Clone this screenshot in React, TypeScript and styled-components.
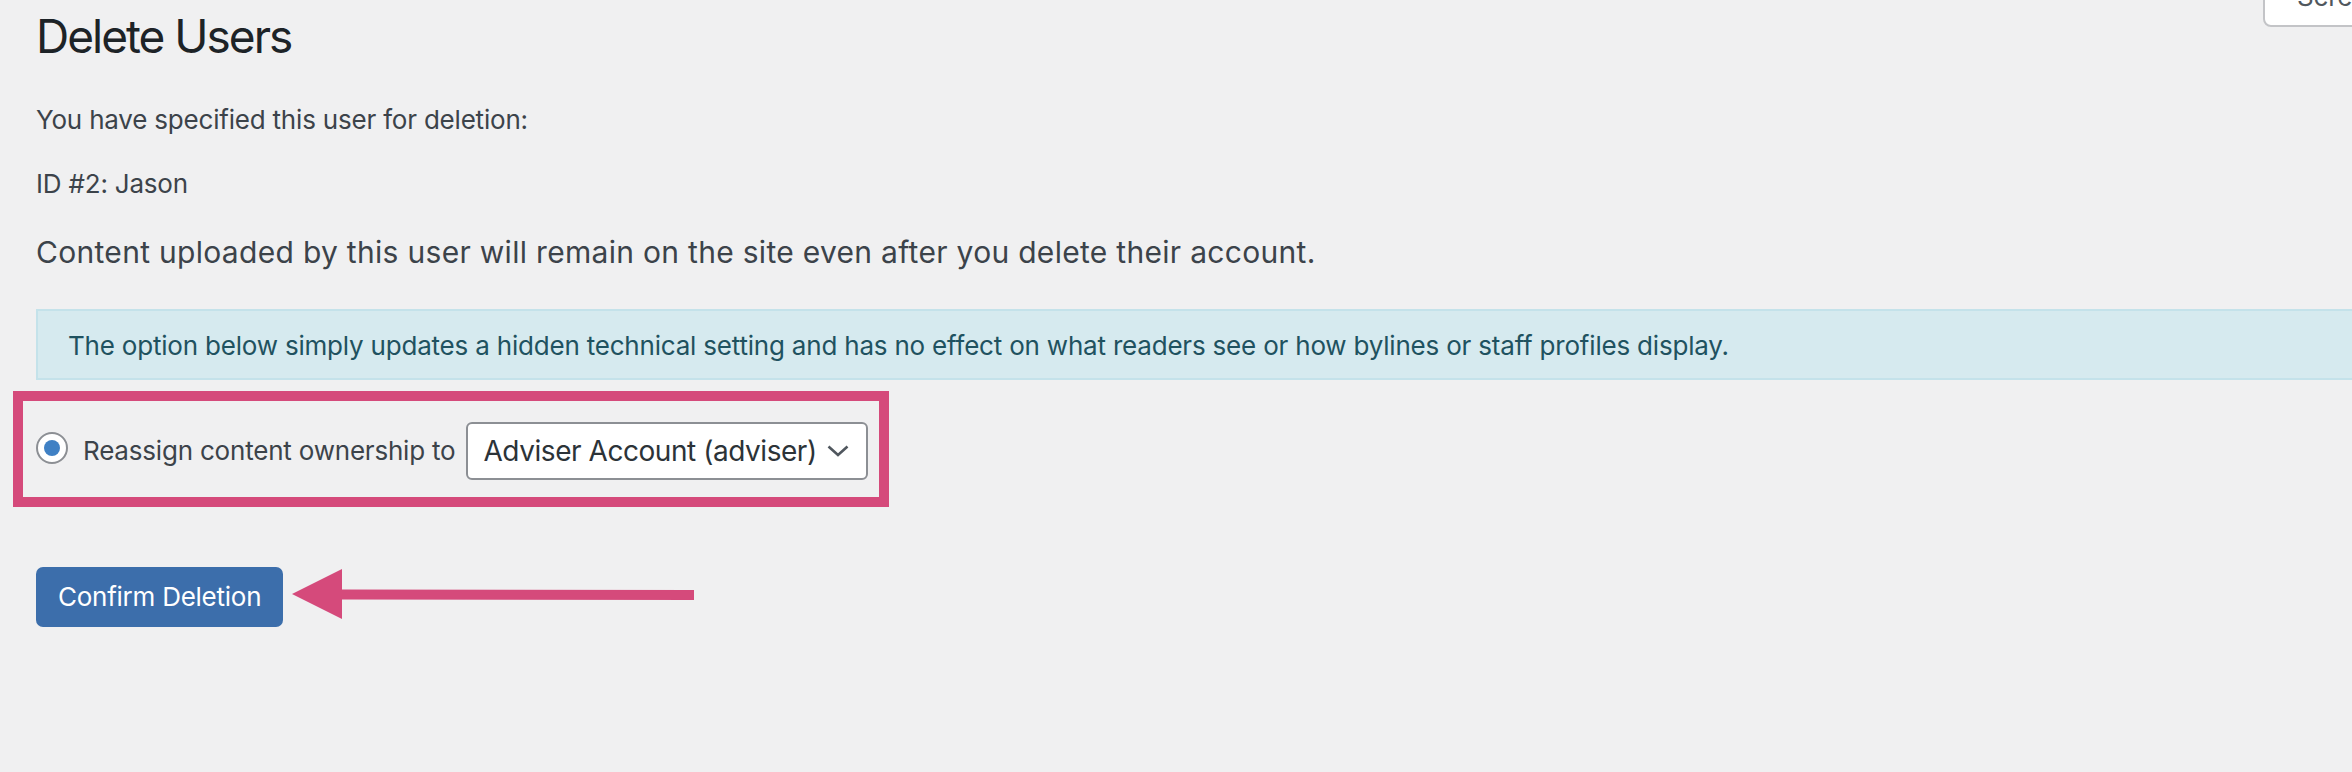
import React from "react";
import styled, { createGlobalStyle } from "styled-components";

const GlobalStyle = createGlobalStyle`
  html, body {
    margin: 0;
    padding: 0;
    background: #f0f0f1;
  }
  body {
    font-family: Inter, "Noto Sans", sans-serif;
    -webkit-font-smoothing: antialiased;
  }
  *, *::before, *::after {
    box-sizing: border-box;
  }
`;

const Page = styled.div`
  width: 2352px;
  height: 772px;
  overflow: hidden;
  background: #f0f0f1;
  padding-left: 36px;
  display: flex;
  flex-direction: column;
  align-items: flex-start;
  color: #3c434a;
  letter-spacing: -0.2px;
`;

const Header = styled.div`
  align-self: stretch;
  display: flex;
  justify-content: space-between;
  align-items: flex-start;
`;

const Title = styled.h1`
  margin: 6px 0 0;
  font-size: 46px;
  line-height: 60px;
  font-weight: 400;
  letter-spacing: -2px;
  color: #1d2327;
`;

const ScreenTab = styled.button`
  flex: none;
  width: 280px;
  height: 60px;
  margin: -33px -191px 0 0;
  padding: 6px 12px 6px 32px;
  border: 2px solid #c3c4c7;
  border-radius: 0 0 8px 8px;
  background: #fff;
  color: #50575e;
  font-family: inherit;
  font-size: 26px;
  line-height: 44px;
  letter-spacing: -0.2px;
  text-align: left;
`;

const Para = styled.p<{ $top: number }>`
  margin: ${(p) => p.$top}px 0 0;
  font-size: 26px;
  line-height: 40px;
`;

const Lead = styled.p`
  margin: 26px 0 0;
  font-size: 30px;
  line-height: 44px;
  letter-spacing: 0.3px;
  color: #3c434a;
`;

const Notice = styled.div`
  align-self: stretch;
  margin: 35px -40px 0 0;
  padding: 14px 32px 12px 30px;
  background: #d6eaef;
  border: 2px solid #c4e2ea;
  color: #1f5260;
  font-size: 26px;
  line-height: 41px;
`;

const Highlight = styled.div`
  margin: 11px 0 0 -23px;
  border: 10px solid #d54a7b;
  padding: 21px 11px 17px 13px;
`;

const OptionRow = styled.label`
  display: flex;
  align-items: center;
  font-size: 26px;
  line-height: 40px;
  color: #3c434a;
`;

const Radio = styled.input`
  appearance: none;
  -webkit-appearance: none;
  align-self: flex-start;
  margin: 10px 15px 0 0;
  width: 32px;
  height: 32px;
  border-radius: 50%;
  border: 2px solid #8c8f94;
  background: #fff;
  display: inline-grid;
  place-content: center;

  &::before {
    content: "";
    width: 16px;
    height: 16px;
    border-radius: 50%;
    background: #3f80c4;
  }
`;

const LabelText = styled.span`
  margin-right: 10px;
  white-space: nowrap;
`;

const SelectBox = styled.div`
  width: 402px;
  height: 58px;
  display: flex;
  align-items: center;
  padding: 0 17px 0 16px;
  border: 2px solid #8c8f94;
  border-radius: 6px;
  background: #fff;
  color: #2c3338;
  font-size: 28px;
  line-height: 40px;
  letter-spacing: -0.45px;
  white-space: nowrap;

  svg {
    margin-left: auto;
    flex: none;
  }
`;

const ActionRow = styled.div`
  display: flex;
  align-items: flex-start;
  gap: 9px;
  margin-top: 60px;
`;

const PrimaryButton = styled.button`
  height: 60px;
  padding: 0 22px;
  border: 0;
  border-radius: 7px;
  background: #3c6eab;
  color: #fff;
  font-family: inherit;
  font-size: 26px;
  line-height: 60px;
  letter-spacing: -0.25px;
`;

const Arrow = styled.svg`
  margin-top: 2px;
  flex: none;
`;

export default function App() {
  return (
    <>
      <GlobalStyle />
      <Page>
        <Header>
          <Title>Delete Users</Title>
          <ScreenTab type="button">Screen Options</ScreenTab>
        </Header>
        <Para $top={34}>You have specified this user for deletion:</Para>
        <Para $top={24}>ID #2: Jason</Para>
        <Lead>
          Content uploaded by this user will remain on the site even after you delete their account.
        </Lead>
        <Notice>
          The option below simply updates a hidden technical setting and has no effect on what readers see or how
          bylines or staff profiles display.
        </Notice>
        <Highlight>
          <OptionRow>
            <Radio type="radio" name="delete_option" defaultChecked />
            <LabelText>Reassign content ownership to</LabelText>
            <SelectBox role="combobox" aria-expanded="false">
              <span>Adviser Account (adviser)</span>
              <svg width="22" height="12" viewBox="0 0 22 12" aria-hidden="true">
                <polyline points="1.5,1.5 11,10 20.5,1.5" fill="none" stroke="#50575e" strokeWidth="2.6" />
              </svg>
            </SelectBox>
          </OptionRow>
        </Highlight>
        <ActionRow>
          <PrimaryButton type="button">Confirm Deletion</PrimaryButton>
          <Arrow width="402" height="50" viewBox="0 0 402 50" aria-hidden="true">
            <polygon points="0,25 50,0 50,50" fill="#d54a7b" />
            <polygon points="48,20.5 402,21 402,31 48,30.5" fill="#d54a7b" />
          </Arrow>
        </ActionRow>
      </Page>
    </>
  );
}
